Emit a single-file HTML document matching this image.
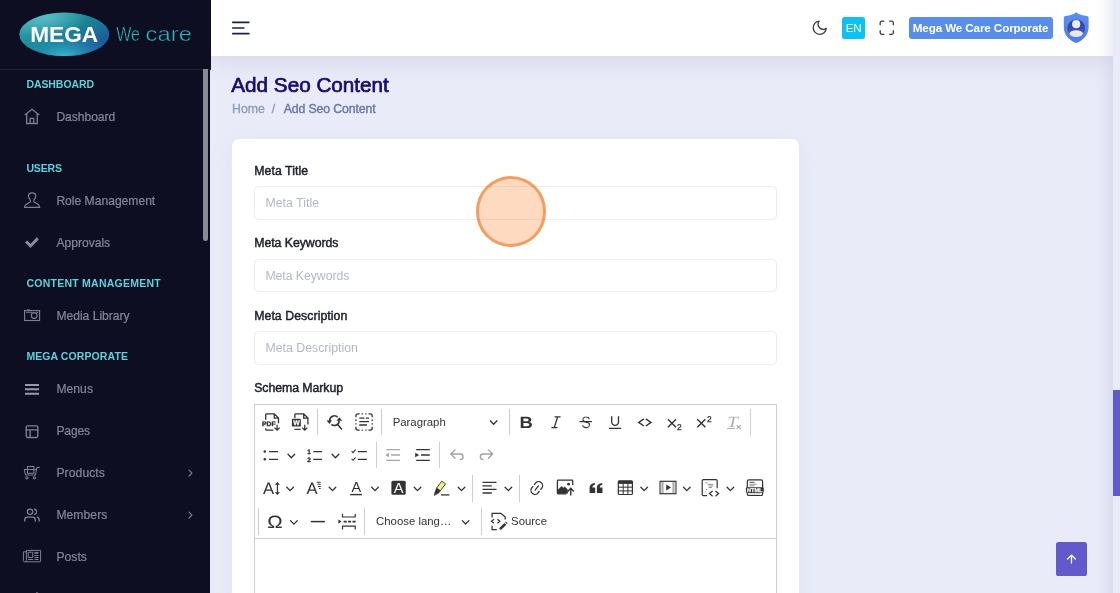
<!DOCTYPE html>
<html lang="en">
<head>
<meta charset="utf-8">
<title>Add Seo Content</title>
<style>
*{box-sizing:border-box;margin:0;padding:0}
html,body{width:1120px;height:593px;overflow:hidden}
body{position:relative;background:#e9ebf8;font-family:"Liberation Sans",Arial,sans-serif;color:#1d212f;}
#wrap{position:absolute;left:0;top:0;width:1120px;height:593px;overflow:hidden;will-change:transform;background:#e9ebf8}
.abs{position:absolute}
.m{white-space:nowrap;display:inline-block}
/* ---------- sidebar ---------- */
#sidebar{position:absolute;left:0;top:0;width:210px;height:593px;background:#0e0e23;overflow:hidden}
#sbhead{position:absolute;left:0;top:0;width:211px;height:70px;background:#0e0e23;border-bottom:1px solid #232338;z-index:3}
#sbthumb{position:absolute;left:203px;top:69px;width:5px;height:172px;background:#8a8a96;border-radius:0 0 3px 3px;z-index:4}
.lbl{position:absolute;left:26.4px;font-size:10.5px;font-weight:bold;color:#5fd1db;line-height:12px;white-space:nowrap}
.itm{position:absolute;left:56.4px;font-size:12.1px;color:#85869a;line-height:14px;white-space:nowrap;-webkit-text-stroke:.2px #85869a}
.ico{position:absolute;overflow:visible}
/* ---------- header ---------- */
#header{position:absolute;left:210px;top:0;width:903px;height:56px;background:#fff;box-shadow:0 6px 22px rgba(90,95,140,.13);z-index:2}
/* ---------- content ---------- */
#title{position:absolute;left:231.3px;top:71.8px;font-size:20.7px;color:#170c6b;line-height:26px;white-space:nowrap;-webkit-text-stroke:.7px #170c6b}
.bc{position:absolute;top:102px;font-size:12.3px;line-height:14px;white-space:nowrap;-webkit-text-stroke:.35px currentColor}
#card{position:absolute;left:232px;top:139px;width:567px;height:470px;background:#fff;border-radius:7px;box-shadow:0 4px 22px rgba(168,180,208,.12)}
.flabel{position:absolute;left:254.2px;font-size:12.3px;line-height:14px;color:#1b1e2c;white-space:nowrap;-webkit-text-stroke:.45px #1b1e2c}
.finput{position:absolute;left:253.7px;width:523.6px;height:33.3px;border:1px solid #ebecf4;border-radius:4.5px;background:#fff}
.ph{position:absolute;left:265.4px;font-size:12.3px;line-height:14px;color:#b1b8cd;white-space:nowrap}
.tbt{font-size:11.375px;line-height:14px;color:#333;white-space:nowrap}
</style>
</head>
<body>
<div id="wrap">

<!-- ================= SIDEBAR ================= -->
<div id="sidebar">
  <div class="lbl" style="top:78px;letter-spacing:-.07px"><span class="m">DASHBOARD</span></div>
  <div class="itm" style="top:109.8px;letter-spacing:-.04px"><span class="m">Dashboard</span></div>
  <div class="lbl" style="top:161.6px;letter-spacing:-.12px"><span class="m">USERS</span></div>
  <div class="itm" style="top:193.8px"><span class="m">Role Management</span></div>
  <div class="itm" style="top:235.8px"><span class="m">Approvals</span></div>
  <div class="lbl" style="top:277.4px;letter-spacing:.25px"><span class="m">CONTENT MANAGEMENT</span></div>
  <div class="itm" style="top:308.8px"><span class="m">Media Library</span></div>
  <div class="lbl" style="top:350.4px;letter-spacing:.09px"><span class="m">MEGA CORPORATE</span></div>
  <div class="itm" style="top:382.2px;letter-spacing:.06px"><span class="m">Menus</span></div>
  <div class="itm" style="top:424.2px;letter-spacing:-.14px"><span class="m">Pages</span></div>
  <div class="itm" style="top:466.2px;letter-spacing:.11px"><span class="m">Products</span></div>
  <div class="itm" style="top:508.2px;letter-spacing:.085px"><span class="m">Members</span></div>
  <div class="itm" style="top:550.2px;letter-spacing:.07px"><span class="m">Posts</span></div>
  <svg class="abs" style="left:0;top:0" width="210" height="593" viewBox="0 0 210 593" fill="none" stroke="#7f8095" stroke-width="1.25" stroke-linejoin="round" stroke-linecap="round">
    <!-- home -->
    <g stroke-width="1.3" stroke-linecap="butt" stroke-linejoin="miter"><path d="M24.9 114.9 L31.95 109.3 L39.2 114.9"/><path d="M26.7 113.8 V123.5 H37.2 V113.8"/><path d="M30.2 123.5 V118.3 H33.7 V123.5"/></g>
    <!-- user -->
    <path stroke-width="1.15" d="M24.5 207.4 H39.7 C39.5 204.6 37.4 203.5 34.7 202.5 C33.6 202.1 33.4 200.7 34.2 199.7 C35.2 198.4 35.8 197.3 35.8 196 C35.8 194 34.2 192.8 32.1 192.8 C30 192.8 28.4 194 28.4 196 C28.4 197.3 29 198.4 30 199.7 C30.8 200.7 30.6 202.1 29.5 202.5 C26.8 203.5 24.7 204.6 24.5 207.4 Z"/>
    <!-- check -->
    <path fill="#8c8c9f" stroke="none" d="M25.1 242.4 L26.9 240.4 L30.65 243.7 L36.75 237.35 L38.75 239.4 L30.4 248 Z"/>
    <!-- camera -->
    <g stroke-width="1.1" stroke-linejoin="miter" stroke-linecap="butt"><rect x="24.6" y="310.6" width="15" height="9.9"/><path d="M26 312.2 H32 M36.4 312.2 H38.2"/><path d="M26.9 309.9 H29.9" stroke-width="1"/><circle cx="34.2" cy="315.5" r="2.9"/></g>
    <!-- menus bars -->
    <g stroke="#9899a9" stroke-width="1.9" stroke-linecap="butt"><path d="M25 385 H39 M25 389.3 H39 M25 393.7 H39"/></g>
    <!-- layout -->
    <g stroke-width="1.35"><rect x="26.2" y="425.9" width="11.6" height="11.6" rx="1.4"/><path d="M26.2 429.8 H37.8 M30.1 437.5 V429.8"/></g>
    <!-- cart -->
    <g stroke-width="1.05" stroke-linecap="butt" stroke-linejoin="miter"><path d="M39.8 467.4 H36.9 L35.5 475 H25.5 L24.4 469.5 H36.4"/><path d="M27.5 469 V466.4 H33.9 V469"/><path d="M27.5 469.6 V473.3 H33.9 V469.6"/><circle cx="26.9" cy="477.8" r="1.15"/><circle cx="34.4" cy="477.8" r="1.15"/></g>
    <!-- users (feather) -->
    <g transform="translate(24.1 507.2) scale(.656)" stroke-width="2"><path d="M17 21v-2a4 4 0 0 0-4-4H5a4 4 0 0 0-4 4v2"/><circle cx="9" cy="7" r="4"/><path d="M23 21v-2a4 4 0 0 0-3-3.87"/><path d="M16 3.13a4 4 0 0 1 0 7.75"/></g>
    <!-- newspaper -->
    <g stroke-width="1" stroke-linecap="butt" stroke-linejoin="round"><path d="M26.4 550.4 H40.6 V561 Q40.6 561.8 39.8 561.8 H24.6 Q23.4 561.8 23.4 560.6 V551.8 H26.4"/><path d="M26.4 550.4 V560.4 Q26.4 561.8 25 561.8"/><rect x="28.2" y="552.2" width="4.5" height="5.3"/><path d="M28 559.5 H33 M34.4 559.5 H38.4 M34.4 557.5 H38.4 M34.4 555.5 H38.4 M34.4 553.3 H38.4 M34.4 552.4 H38.4"/></g>
    <!-- chevrons -->
    <g stroke-width="1.1"><path d="M189 470.2 L192 473.1 L189 476"/><path d="M189 512.2 L192 515.1 L189 518"/></g>
    <!-- next item peek -->
    <circle cx="37" cy="593" r=".9" fill="#7f8095" stroke="none"/>
  </svg>
</div>
<div id="sbhead">
  <svg class="abs" style="left:0;top:0" width="211" height="69" viewBox="0 0 211 69">
    <defs>
      <linearGradient id="lg1" x1="0" y1="0" x2="1" y2="1">
        <stop offset="0" stop-color="#3fb4bd"/><stop offset=".45" stop-color="#1b8596"/><stop offset=".8" stop-color="#1d5a9c"/><stop offset="1" stop-color="#2547a0"/>
      </linearGradient>
      <radialGradient id="lg2" cx=".5" cy="1.02" r=".55" gradientTransform="translate(0 0)">
        <stop offset="0" stop-color="#35c5d3" stop-opacity=".95"/><stop offset=".6" stop-color="#2aa9c0" stop-opacity=".35"/><stop offset="1" stop-color="#2aa9c0" stop-opacity="0"/>
      </radialGradient>
      <radialGradient id="lg3" cx=".3" cy=".12" r=".45">
        <stop offset="0" stop-color="#7fd9dc" stop-opacity=".5"/><stop offset="1" stop-color="#7fd9dc" stop-opacity="0"/>
      </radialGradient>
    </defs>
    <ellipse cx="64.3" cy="34.3" rx="45" ry="21.8" fill="url(#lg1)"/>
    <ellipse cx="64.3" cy="34.3" rx="45" ry="21.8" fill="url(#lg2)"/>
    <ellipse cx="64.3" cy="34.3" rx="45" ry="21.8" fill="url(#lg3)"/>
    <text x="30.2" y="41.5" font-family="'Liberation Sans',Arial,sans-serif" font-weight="bold" font-size="21.3" fill="#fff" textLength="68" lengthAdjust="spacingAndGlyphs">MEGA</text>
    <text x="116.3" y="41.2" font-family="'Liberation Sans',Arial,sans-serif" font-size="20.2" fill="#2eb3b6" stroke="#0e0e23" stroke-width=".4" textLength="23.6" lengthAdjust="spacingAndGlyphs">We</text>
    <text x="145.6" y="41.2" font-family="'Liberation Sans',Arial,sans-serif" font-size="20.2" fill="#2eb3b6" stroke="#0e0e23" stroke-width=".4" textLength="46.3" lengthAdjust="spacingAndGlyphs">care</text>
  </svg>
</div>
<div id="sbthumb"></div>

<!-- ================= HEADER ================= -->
<div id="header">
  <!-- hamburger -->
  <svg class="abs" style="left:21px;top:19px" width="20" height="18" viewBox="0 0 20 18"><g stroke="#1c2148" stroke-width="1.7" stroke-linecap="round"><line x1="1.8" y1="3.3" x2="17.8" y2="3.3"/><line x1="1.8" y1="9" x2="12.8" y2="9"/><line x1="1.8" y1="14.7" x2="17.8" y2="14.7"/></g></svg>
  <!-- moon -->
  <svg class="abs" style="left:601px;top:19.4px" width="17.5" height="17.5" viewBox="0 0 24 24" fill="none" stroke="#3b3c47" stroke-width="1.8" stroke-linecap="round" stroke-linejoin="round"><path d="M21 12.79A9 9 0 1 1 11.21 3 7 7 0 0 0 21 12.79z"/></svg>
  <!-- EN -->
  <div class="abs" style="left:632px;top:17px;width:23px;height:21.6px;background:#0fc1f3;border-radius:2.5px;color:#fff;font-size:11.6px;line-height:21.8px;text-align:center;letter-spacing:-.2px"><span class="m">EN</span></div>
  <!-- fullscreen -->
  <svg class="abs" style="left:668.2px;top:19.2px" width="17.5" height="17.5" viewBox="0 0 24 24" fill="none" stroke="#3b3c47" stroke-width="1.8" stroke-linecap="round" stroke-linejoin="round"><path d="M8 3H5a2 2 0 0 0-2 2v3m18 0V5a2 2 0 0 0-2-2h-3m0 18h3a2 2 0 0 0 2-2v-3M3 16v3a2 2 0 0 0 2 2h3"/></svg>
  <!-- corp badge -->
  <div class="abs" style="left:698.6px;top:17px;width:144px;height:21.6px;background:#588ee9;border-radius:3px;color:#fff;font-weight:bold;font-size:11.7px;line-height:21.8px;text-align:center;white-space:nowrap;letter-spacing:-.14px"><span class="m">Mega We Care Corporate</span></div>
  <!-- avatar -->
  <svg class="abs" style="left:853px;top:11px" width="27" height="34" viewBox="1063 11 27 34">
    <defs><linearGradient id="av1" x1="0" y1="0" x2="0" y2="1"><stop offset="0" stop-color="#5c8fee"/><stop offset="1" stop-color="#4a7fe2"/></linearGradient>
    <linearGradient id="av2" x1="0" y1="0" x2="0" y2="1"><stop offset="0" stop-color="#2f3e9e"/><stop offset=".55" stop-color="#3a4fb4"/><stop offset="1" stop-color="#4668cc"/></linearGradient></defs>
    <path d="M1076.2 12.3C1073.6 14.4 1069.6 15.6 1065.6 15.9C1064.4 16 1063.8 16.7 1063.8 17.9V27.2C1063.8 34.6 1069 40.2 1076.2 43.1C1083.4 40.2 1088.6 34.6 1088.6 27.2V17.9C1088.6 16.7 1088 16 1086.8 15.9C1082.8 15.6 1078.8 14.4 1076.2 12.3Z" fill="url(#av1)"/>
    <circle cx="1076.2" cy="28.3" r="8.9" fill="url(#av2)"/>
    <circle cx="1076.2" cy="24.2" r="4.1" fill="#e9ebf6"/>
    <ellipse cx="1076.2" cy="33.6" rx="6.7" ry="3.3" fill="#e9e9ec"/>
  </svg>
</div>

<!-- ================= CONTENT ================= -->
<div id="title"><span class="m">Add Seo Content</span></div>
<div class="bc" style="left:232px;color:#8f9cc0"><span class="m">Home</span></div>
<div class="bc" style="left:271.8px;color:#8f9cc0"><span class="m">/</span></div>
<div class="bc" style="left:283.7px;color:#6575ab;letter-spacing:-.12px"><span class="m">Add Seo Content</span></div>

<div id="card"></div>
<div class="flabel" style="top:163.7px;letter-spacing:.07px"><span class="m">Meta Title</span></div>
<div class="finput" style="top:186px;height:34px"></div>
<div class="ph" style="top:196.2px;letter-spacing:.04px"><span class="m">Meta Title</span></div>

<div class="flabel" style="top:236.1px;letter-spacing:-.04px"><span class="m">Meta Keywords</span></div>
<div class="finput" style="top:259px;height:33px"></div>
<div class="ph" style="top:268.8px;letter-spacing:-.06px"><span class="m">Meta Keywords</span></div>

<div class="flabel" style="top:308.5px;letter-spacing:.06px"><span class="m">Meta Description</span></div>
<div class="finput" style="top:331px;height:34px"></div>
<div class="ph" style="top:341.4px;letter-spacing:.02px"><span class="m">Meta Description</span></div>

<div class="flabel" style="top:381.2px;letter-spacing:-.06px"><span class="m">Schema Markup</span></div>

<!--EDITOR-START-->
<div id="edbox" class="abs" style="left:253.8px;top:404px;width:523.6px;height:200px;border:1px solid #ccced1;background:#fff"></div>
<div id="edtb" class="abs" style="left:254.8px;top:405px;width:521.6px;height:134px;background:#fff;border-bottom:1px solid #ccced1"></div>
<div class="abs tbt" style="left:392.7px;top:414.5px"><span class="m">Paragraph</span></div>
<div class="abs tbt" style="left:376.1px;top:514.1px"><span class="m">Choose lang…</span></div>
<div class="abs tbt" style="left:511.1px;top:514.1px"><span class="m">Source</span></div>
<svg class="abs" style="left:254px;top:404px" width="524" height="189" viewBox="254 404 524 189" fill="none" stroke="#333" stroke-width="1.3" font-family="'Liberation Sans',Arial,sans-serif" text-rendering="geometricPrecision">
  <!-- separators -->
  <g stroke="#ccced1" stroke-width="1" shape-rendering="crispEdges">
    <path d="M317.5 408.5V435.2M381 408.5V435.2M509.5 408.5V435.2M750.5 408.5V435.2"/>
    <path d="M376 441.8V468.4M439.7 441.8V468.4"/>
    <path d="M472.6 475V501.7M519.6 475V501.7"/>
    <path d="M258.5 508.3V535M364.6 508.3V535M481.3 508.3V535"/>
  </g>
  <!-- chevrons -->
  <g stroke-width="1.3" stroke-linecap="round" stroke-linejoin="round">
    <path d="M490.3 420.8l3.3 3.4 3.3-3.4"/>
    <path d="M288 454.3l3.35 3.4 3.35-3.4M332.1 454.3l3.35 3.4 3.35-3.4"/>
    <path d="M286.8 487.2l3.3 3.4 3.3-3.4M329.2 487.2l3.3 3.4 3.3-3.4M371.7 487.2l3.3 3.4 3.3-3.4M414.2 487.2l3.3 3.4 3.3-3.4M458.2 487.2l3.3 3.4 3.3-3.4M505.1 487.2l3.3 3.4 3.3-3.4M640.9 487.2l3.3 3.4 3.3-3.4M683.5 487.2l3.3 3.4 3.3-3.4M727.1 487.2l3.3 3.4 3.3-3.4"/>
    <path d="M290.5 520.6l3.4 3.5 3.4-3.5M462.3 520.6l3.3 3.4 3.3-3.4"/>
  </g>

  <!-- ===== ROW 1 ===== -->
  <!-- export pdf -->
  <g>
    <path d="M265.7 419.7V414.7Q265.7 413.9 266.5 413.9H274.3L278.5 418.1V423.2M274.3 413.9V418.1H278.5M265.7 428.3V429.3Q265.7 430.1 266.5 430.1H273.4"/>
    <text x="262.1" y="425.7" font-size="6.4" font-weight="bold" fill="#333" stroke="#333" stroke-width=".35" textLength="13.6" lengthAdjust="spacingAndGlyphs">PDF</text>
    <path d="M277.1 424.8V430M274.5 427.6l2.6 2.6 2.6-2.6" stroke-width="1.25"/>
  </g>
  <!-- export word -->
  <g>
    <path d="M294.9 418V414.7Q294.9 413.9 295.7 413.9H303.7L307.9 418.1V424.5M303.7 413.9V418.1H307.9"/>
    <rect x="291.9" y="418.8" width="8.9" height="7.8" rx=".9" fill="#333" stroke="none"/>
    <text x="296.35" y="425.3" font-size="6.8" font-weight="bold" fill="#fff" stroke="#fff" stroke-width=".25" text-anchor="middle">W</text>
    <path d="M294.4 429.3H300.8" stroke-width="1.2"/>
    <path d="M304.75 424.8V430M302.15 427.6l2.6 2.6 2.6-2.6" stroke-width="1.25"/>
  </g>
  <!-- find and replace -->
  <g stroke-width="1.6">
    <path d="M329.7 420.9A4.7 4.7 0 0 1 337.7 417.2"/>
    <path d="M331.4 424.4A4.7 4.7 0 0 0 339.1 420.7"/>
    <path d="M326.6 420.4L332 420.2L329.4 424Z M336.4 420.7L342.2 420.7L339.4 417.2Z" fill="#333" stroke="none"/>
    <path d="M337.7 424.4L341.5 429" stroke-linecap="round" stroke-width="1.5"/>
  </g>
  <!-- select all -->
  <g stroke-width="1.3">
    <path d="M355.9 417.3V416Q355.9 413.9 358 413.9H359.6M368.5 413.9H370.1Q372.2 413.9 372.2 416V417.3M372.2 426.8V428.1Q372.2 430.2 370.1 430.2H368.5M359.6 430.2H358Q355.9 430.2 355.9 428.1V426.8"/>
    <path d="M361.6 413.9h1.3M365.3 413.9h1.3M361.6 430.2h1.3M365.3 430.2h1.3M355.9 419.6v1.3M355.9 423.2v1.3M372.2 419.6v1.3M372.2 423.2v1.3"/>
    <path d="M359.3 418.2H364.4M365.9 418.2H369M359.3 421.6H369M359.3 425H367"/>
  </g>
  <!-- bold -->
  <text id="iB" transform="translate(519.5 428) scale(1.12 1)" font-size="16.5" font-weight="bold" fill="#333" stroke="none">B</text>
  <!-- italic -->
  <path d="M554.6 416.8H560.6M551.4 427.5H557.4M557.7 416.8L554.3 427.5" stroke-width="1.25"/>
  <!-- strikethrough -->
  <text id="iS" transform="translate(581.2 428) scale(.86 1)" font-size="16.6" fill="#333" stroke="#fff" stroke-width=".2">S</text>
  <path d="M579.5 421.6H591.9" stroke-width="1.2"/>
  <!-- underline -->
  <path d="M611.7 416.2V421.8A3.4 3.6 0 0 0 618.5 421.8V416.2M609 428.4H621.2" stroke-width="1.35"/>
  <!-- code -->
  <path d="M643.9 418.8L638.7 422.4L643.9 426M645.8 418.8L651 422.4L645.8 426" stroke-width="1.4"/>
  <!-- subscript -->
  <path d="M667.9 419.3L676 427.2M676 419.3L667.9 427.2" stroke-width="1.4"/>
  <text x="677" y="430.3" font-size="8.4" fill="#333" stroke="#333" stroke-width=".3">2</text>
  <!-- superscript -->
  <path d="M697.3 419.3L705.4 427.2M705.4 419.3L697.3 427.2" stroke-width="1.4"/>
  <text x="706.9" y="421.7" font-size="8.4" fill="#333" stroke="#333" stroke-width=".3">2</text>
  <!-- remove format -->
  <g opacity=".4">
    <text id="iT" transform="translate(727.3 426.8) scale(1.22 1)" font-family="'Liberation Serif',serif" font-style="italic" font-size="15.6" fill="#333" stroke="none">T</text>
    <path d="M727.1 428.5H734.9" stroke-width="1"/>
    <path d="M736.6 425.2L740.8 428.9M740.8 425.2L736.6 428.9" stroke-width="1.2"/>
  </g>

  <!-- ===== ROW 2 ===== -->
  <!-- bulleted -->
  <circle cx="264.8" cy="451.6" r="1.25" fill="#333" stroke="none"/><circle cx="264.8" cy="459.3" r="1.25" fill="#333" stroke="none"/>
  <path d="M269.1 451.6H278M269.1 459.3H278"/>
  <!-- numbered -->
  <text x="307.2" y="453.7" font-size="6.4" font-weight="bold" fill="#333" stroke="#333" stroke-width=".3">1</text>
  <text x="307.2" y="462.3" font-size="6.4" font-weight="bold" fill="#333" stroke="#333" stroke-width=".3">2</text>
  <path d="M313.3 451.6H322.1M313.3 459.3H322.1"/>
  <!-- todo -->
  <path d="M351.6 451.2l1.4 1.4 2.6-2.9M351.6 458.9l1.4 1.4 2.6-2.9" stroke-width="1.1"/>
  <path d="M357.8 451.6H366.9M357.8 459.3H366.9"/>
  <!-- outdent (disabled) -->
  <g opacity=".42"><path d="M386.2 449.6H400.1M391 455H400.1M386.2 460.4H400.1"/><path d="M389 452.8V457.2L385.2 455Z" fill="#333" stroke="none"/></g>
  <!-- indent -->
  <path d="M416.2 449.6H429.8M421 455H429.8M416.2 460.4H429.8"/><path d="M415.2 452.8V457.2L419.2 455Z" fill="#333" stroke="none"/>
  <!-- undo / redo (disabled) -->
  <g opacity=".46" stroke-linecap="round" stroke-linejoin="round"><path d="M455 449.9L450.8 454L455 458.2M450.8 454H460.3A2.8 2.8 0 0 1 460.3 459.6"/>
  <path d="M488.4 449.9L492.6 454L488.4 458.2M492.6 454H483.1A2.8 2.8 0 0 0 483.1 459.6"/></g>

  <!-- ===== ROW 3 ===== -->
  <!-- font size -->
  <text x="263" y="494" font-size="16.6" fill="#333" stroke="none">A</text>
  <path d="M277.4 483V494M275.5 484.8L277.4 482.8L279.3 484.8M275.5 492.2L277.4 494.2L279.3 492.2" stroke-width="1.15"/>
  <!-- font family -->
  <text x="306.4" y="494" font-size="16.6" fill="#333" stroke="none">A</text>
  <path d="M316.6 482.2H320.7M317.4 484.3H320.7M318 486.4H320.7M319 488.4H320.7" stroke-width="1.05"/>
  <!-- font color -->
  <text x="351.5" y="492.4" font-size="14.4" fill="#333" stroke="none">A</text>
  <path d="M350.2 494.6H362" stroke-width="1.4"/>
  <!-- font bg -->
  <rect x="391.4" y="480.7" width="14.3" height="14.1" rx="1.6" fill="#333" stroke="none"/>
  <text x="398.55" y="493" font-size="14.6" fill="#fff" stroke="none" text-anchor="middle">A</text>
  <!-- highlight -->
  <path d="M441.7 481.2L445.6 483.9L440.3 490.8L436.6 488.1Z" fill="#f4f186" stroke="#333" stroke-width=".9" stroke-linejoin="round"/>
  <path d="M436.6 488.1L440.3 490.8L438.8 493L434.2 495.5L435.3 491Z" fill="#333" stroke="#333" stroke-width=".6"/>
  <path d="M441 494.9H449.4"/>
  <!-- align -->
  <path d="M482.5 482.3H496.5M482.5 485.9H491.8M482.5 489.4H496.5M482.5 493H491.8"/>
  <!-- link -->
  <g transform="translate(536.8 488) rotate(-52.5)"><path d="M1.3 -4H3A4 4 0 0 1 3 4H1.3M-1.3 4H-3A4 4 0 0 1 -3 -4H-1.3M-2.7 0H2.7" stroke-linecap="round" stroke-width="1.3"/></g>
  <!-- image upload -->
  <path d="M566 493.9H558.2Q557.4 493.9 557.4 493.1V481Q557.4 480.2 558.2 480.2H571.9Q572.7 480.2 572.7 481V485"/>
  <path d="M558 493.4V489.8L561.6 486.2L563.4 488L564.8 486.8L567.7 489.8V493.4Z" fill="#333" stroke="#333" stroke-width=".4" stroke-linejoin="round"/>
  <circle cx="568.6" cy="484.2" r="1.4" fill="#333" stroke="none"/>
  <path d="M570.8 495.4V488.8M567.7 491.4L570.8 488.3L573.9 491.4" stroke-width="1.4"/>
  <!-- quote -->
  <path id="qm" d="M589.6 492.9V487.6C589.6 485 591.5 483.3 595 483V484.7C593.3 485 592.5 485.9 592.4 487.4H595.2V492.9Z" fill="#333" stroke="none"/>
  <path d="M596.9 492.9V487.6C596.9 485 598.8 483.3 602.3 483V484.7C600.6 485 599.8 485.9 599.7 487.4H602.5V492.9Z" fill="#333" stroke="none"/>
  <!-- table -->
  <rect x="618.3" y="480.9" width="14.1" height="13.6" rx="1" stroke-width="1.2"/>
  <rect x="618.3" y="480.9" width="14.1" height="3" fill="#333" stroke="none"/>
  <path d="M623.2 483.5V494.5M627.9 483.5V494.5M618.3 487.2H632.4M618.3 490.9H632.4" stroke-width="1"/>
  <!-- media -->
  <rect x="660.1" y="481.3" width="15.8" height="12.4" stroke-width="1.2"/>
  <path d="M661.5 481.9V493.1M674.5 481.9V493.1" stroke="#cfcfcf" stroke-width="1.5"/>
  <path d="M662.9 481.3V493.7M673.1 481.3V493.7" stroke-width=".7" stroke="#555"/>
  <path d="M666.2 484.6V490.4L671 487.5Z" fill="#333" stroke="none"/>
  <!-- code block -->
  <path d="M707 495.6H703.4Q702.2 495.6 702.2 494.4V480.9Q702.2 479.7 703.4 479.7H716Q717.2 479.7 717.2 480.9V488.2" stroke-width="1.2"/>
  <path d="M705.4 482.7H707.6M707.6 484.4H713.2M708.6 486H713.2M708.6 487.6H712M705.8 489.5H707.4M704.8 492.5l1.2-1.2" stroke="#777" stroke-width=".8"/>
  <path d="M712.6 491L709.5 493.6L712.6 496.2M715.5 491L718.6 493.6L715.5 496.2" stroke-width="1.25"/>
  <!-- html embed -->
  <rect x="747.3" y="479.8" width="15.3" height="15.7" rx="1.6" stroke-width="1.2"/>
  <path d="M749.4 482.3H754.5" stroke="#444" stroke-width=".9"/><path d="M749.4 484.2H756.7M749.4 485.8H754.5" stroke="#888" stroke-width=".9"/>
  <path d="M748.6 494H760.6" stroke="#aaa" stroke-width=".8"/>
  <rect x="745.9" y="487.2" width="17.8" height="5.7" rx="1.4" fill="#333" stroke="none"/>
  <text x="747.1" y="492.1" font-size="5.3" font-weight="bold" fill="#fff" stroke="#fff" stroke-width=".25" textLength="15.4" lengthAdjust="spacingAndGlyphs">HTML</text>

  <!-- ===== ROW 4 ===== -->
  <text id="iO" transform="translate(267.3 528) scale(1.15 1)" font-size="17.9" fill="#333" stroke="#333" stroke-width=".1">Ω</text>
  <path d="M310.8 521.6H324.9" stroke-width="1.5"/>
  <!-- page break -->
  <path d="M342.5 514.1V517H355.2V514.1M342.5 529.4V526.2H355.2V529.4" stroke-width="1.2"/>
  <path d="M343.6 521.6H355.6" stroke-dasharray="3.1 1.35" stroke-width="1.65"/>
  <path d="M338.4 519.5V523.7L341.5 521.6Z" fill="#333" stroke="none"/>
  <!-- source -->
  <path d="M492.1 517.4V513.3H500.9L505.2 517.1V519.6M492.1 525.8V529.6H496.8" stroke-width="1.25"/>
  <path d="M494 519.3L491.5 521.3L494 523.3M497.4 519.3L499.9 521.3L497.4 523.3" stroke-width="1.2"/>
  <path d="M500 529.2L505.4 523.8" stroke-width="2.6"/><path d="M506 523.2L506.8 522.4" stroke-width="2.4"/>
</svg>
<!--EDITOR-END-->

<!-- right-edge shadow + scrollbar -->
<div class="abs" style="left:1096px;top:0;width:17px;height:593px;background:linear-gradient(90deg,rgba(100,105,175,0) 0%,rgba(100,105,175,.035) 45%,rgba(100,105,175,.115) 100%);z-index:5"></div>
<div class="abs" style="left:1113px;top:0;width:7px;height:593px;background:#e9ebf8;z-index:6"></div>
<div class="abs" style="left:1113px;top:390px;width:7px;height:106px;background:#6259ca;z-index:7"></div>
<!-- back to top -->
<div class="abs" style="left:1056.2px;top:542.2px;width:30.6px;height:33.4px;background:#6259ca;border-radius:2.6px;z-index:4">
  <svg class="abs" style="left:9.8px;top:11.6px" width="11" height="10" viewBox="0 0 11 10" fill="none" stroke="#fff" stroke-width="1.3" stroke-linecap="round" stroke-linejoin="round"><path d="M5.5 9V1.3M1.6 5L5.5 1.1L9.4 5"/></svg>
</div>
<!-- click indicator -->
<div class="abs" style="left:475.6px;top:176.4px;width:70.8px;height:70.8px;border-radius:50%;background:rgba(250,140,60,.32);border:3px solid rgba(236,130,50,.68);z-index:8"></div>

</div>
</body>
</html>
